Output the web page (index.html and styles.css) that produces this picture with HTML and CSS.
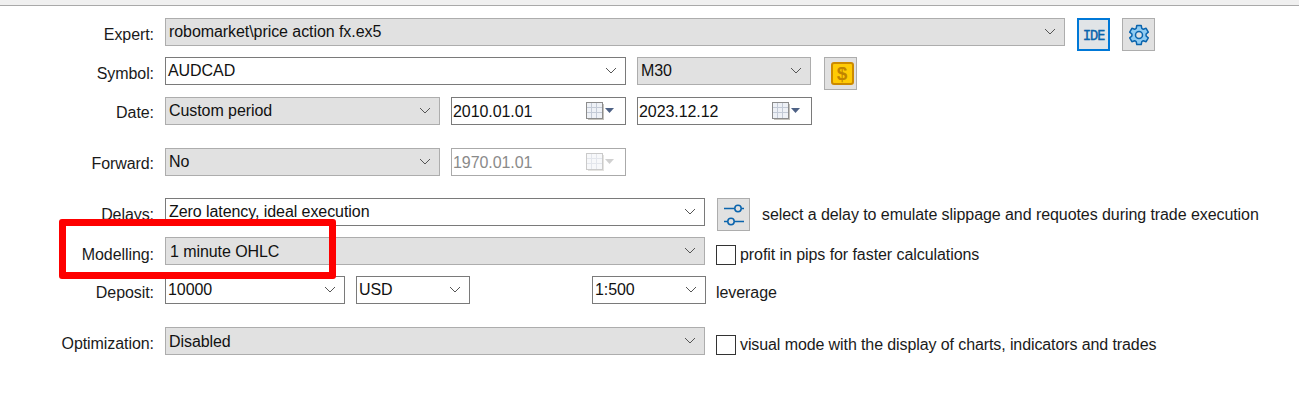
FILE: index.html
```html
<!DOCTYPE html>
<html lang="en">
<head>
<meta charset="utf-8">
<title>Strategy Tester Settings</title>
<link rel="stylesheet" href="styles.css">
</head>
<body>
<div class="topbar"></div>
<main class="form">
  <div class="row">
    <span class="label">Expert:</span>
    <div class="field gray w-expert"><span>robomarket\price action fx.ex5</span><svg class="chev" viewBox="0 0 12 7"><path d="M1 1l5 5 5-5"/></svg></div>
    <button class="iconbtn ide">IDE</button>
    <button class="iconbtn gear">
      <svg viewBox="0 0 24 24" width="24" height="24"><path class="gear-body" d="M9.800 2.500h4.400l.6 2.900 1.500.9 2.800-1 2.200 3.800-2.200 1.900v2l2.200 1.900-2.200 3.800-2.800-1-1.500.9-.6 2.900H9.800l-.6-2.900-1.500-.9-2.800 1-2.200-3.800 2.200-1.900v-2L2.700 9.100l2.200-3.800 2.800 1 1.500-.9z"/><circle class="gear-hole" cx="12" cy="12" r="3.500"/></svg>
    </button>
  </div>
  <div class="row">
    <span class="label">Symbol:</span>
    <div class="field white w-symbol"><span class="tight">AUDCAD</span><svg class="chev" viewBox="0 0 12 7"><path d="M1 1l5 5 5-5"/></svg></div>
    <div class="field gray w-period"><span>M30</span><svg class="chev" viewBox="0 0 12 7"><path d="M1 1l5 5 5-5"/></svg></div>
    <button class="iconbtn dollar"><span class="coin">$</span></button>
  </div>
  <div class="row">
    <span class="label label-high">Date:</span>
    <div class="field gray w-range"><span>Custom period</span><svg class="chev" viewBox="0 0 12 7"><path d="M1 1l5 5 5-5"/></svg></div>
    <div class="field date"><span class="tight">2010.01.01</span>
      <svg class="cal" viewBox="0 0 28 18"><rect class="shadow" x="2" y="2" width="16" height="16"/><rect class="sheet" x=".5" y=".5" width="16" height="16"/><path class="lines" d="M5.500 1v15M10.500 1v15M1 5.500h15M1 10.500h15"/><path class="arrow" d="M19 6h9l-4.500 5z"/></svg></div>
    <div class="field date"><span class="tight">2023.12.12</span>
      <svg class="cal" viewBox="0 0 28 18"><rect class="shadow" x="2" y="2" width="16" height="16"/><rect class="sheet" x=".5" y=".5" width="16" height="16"/><path class="lines" d="M5.500 1v15M10.500 1v15M1 5.500h15M1 10.500h15"/><path class="arrow" d="M19 6h9l-4.500 5z"/></svg></div>
  </div>
  <div class="row">
    <span class="label label-high">Forward:</span>
    <div class="field gray w-range"><span>No</span><svg class="chev" viewBox="0 0 12 7"><path d="M1 1l5 5 5-5"/></svg></div>
    <div class="field date disabled"><span class="tight">1970.01.01</span>
      <svg class="cal" viewBox="0 0 28 18"><rect class="shadow" x="2" y="2" width="16" height="16"/><rect class="sheet" x=".5" y=".5" width="16" height="16"/><path class="lines" d="M5.500 1v15M10.500 1v15M1 5.500h15M1 10.500h15"/><path class="arrow" d="M19 6h9l-4.500 5z"/></svg></div>
  </div>
  <div class="row">
    <span class="label">Delays:</span>
    <div class="field white w-wide"><span>Zero latency, ideal execution</span><svg class="chev" viewBox="0 0 12 7"><path d="M1 1l5 5 5-5"/></svg></div>
    <button class="iconbtn sliders">
      <svg viewBox="0 0 24 18" width="24" height="18"><path d="M2 2.500h11M19 2.500h3M2 15.500h4M12 15.500h10"/><circle cx="16" cy="2.500" r="3.200"/><circle cx="9" cy="15.500" r="3.200"/></svg>
    </button>
    <span class="note note-delay">select a delay to emulate slippage and requotes during trade execution</span>
  </div>
  <div class="row">
    <span class="label label-low">Modelling:</span>
    <div class="field gray w-wide low"><span class="nudge">1 minute OHLC</span><svg class="chev" viewBox="0 0 12 7"><path d="M1 1l5 5 5-5"/></svg></div>
    <label class="check"><span class="box"></span>profit in pips for faster calculations</label>
  </div>
  <div class="row">
    <span class="label">Deposit:</span>
    <div class="field white w-deposit"><span class="tight">10000</span><svg class="chev" viewBox="0 0 12 7"><path d="M1 1l5 5 5-5"/></svg></div>
    <div class="field white w-currency"><span class="tight">USD</span><svg class="chev" viewBox="0 0 12 7"><path d="M1 1l5 5 5-5"/></svg></div>
    <div class="field white w-lever"><span class="tight">1:500</span><svg class="chev" viewBox="0 0 12 7"><path d="M1 1l5 5 5-5"/></svg></div>
    <span class="note note-lever">leverage</span>
  </div>
  <div class="row">
    <span class="label">Optimization:</span>
    <div class="field gray w-wide low"><span>Disabled</span><svg class="chev" viewBox="0 0 12 7"><path d="M1 1l5 5 5-5"/></svg></div>
    <label class="check check-long"><span class="box"></span>visual mode with the display of charts, indicators and trades</label>
  </div>
</main>
<div class="highlight"></div>
</body>
</html>
```
FILE: styles.css
```css
* { box-sizing: border-box; }
html, body { margin: 0; height: 420px; overflow: hidden; background: #fff; }
body {
  position: relative;
  font-family: "Liberation Sans", Arial, sans-serif;
  font-size: 16px;
  letter-spacing: -.07px;
  color: #111;
}
.topbar {
  height: 6px;
  background: #f0f0f0;
  border-bottom: 1px solid #a9a9a9;
}
.form {
  display: grid;
  grid-template-rows: 39px 40px 51px 50px 39px 39px 51px 39px;
  padding-top: 12px;
}
.row {
  display: flex;
  align-items: flex-start;
  gap: 11px;
}
.label {
  width: 154px;
  height: 28px;
  line-height: 33px;
  text-align: right;
  color: #1a1a1a;
}
.label-high { line-height: 31px; }
.label-low { line-height: 35px; }
.field {
  display: flex;
  align-items: center;
  justify-content: space-between;
  height: 28px;
  padding: 0 8px 1px 3px;
  line-height: 22px;
  flex: none;
}
.low span { position: relative; top: 1px; }
.nudge { margin-left: 1px; }
.gray { background: #e1e1e1; border: 1px solid #adadad; }
.white { background: #fff; border: 1px solid #7a7a7a; }
.tight { margin-left: -1px; }
.chev { width: 12px; height: 7px; fill: none; stroke: #555; stroke-width: 1; }
.w-expert { width: 900px; }
.w-symbol { width: 461px; }
.w-period { width: 174px; }
.w-range { width: 275px; }
.w-wide { width: 540px; }
.w-deposit { width: 180px; }
.w-currency { width: 114px; }
.w-lever { width: 114px; margin-left: 111px; }
.date {
  width: 175px;
  background: #fff;
  border: 1px solid #7a7a7a;
  padding-right: 11px;
}
.date .tight { margin-left: -2px; position: relative; top: 1px; }
.date.disabled { color: #8a8a8a; border-color: #aaa; }
.cal { width: 28px; height: 18px; margin-top: 1px; }
.shadow { fill: #c4c2bc; }
.sheet { fill: #eef1f6; stroke: #8c8c8c; }
.lines { fill: none; stroke: #c3cad6; }
.arrow { fill: #4d6185; }
.disabled .cal { opacity: .45; }
.disabled .arrow { fill: #999; }
.iconbtn {
  display: flex;
  align-items: center;
  justify-content: center;
  width: 33px;
  height: 33px;
  padding: 0;
  margin-left: 1px;
  background: #e1e1e1;
  border: 1px solid #adadad;
  font: inherit;
}
.ide {
  background: #e1e4e7;
  border: 2px solid #0078d7;
  color: #0a64ad;
  font-family: "DejaVu Sans Mono", monospace;
  font-size: 14px;
  letter-spacing: -1.2px;
  -webkit-text-stroke: .3px #0a64ad;
}
.gear-body { fill: #8fcbf2; stroke: #0a64ad; stroke-width: 1.5; stroke-linejoin: round; }
.gear-hole { fill: #e1e1e1; stroke: #0a64ad; stroke-width: 1.5; }
.dollar { margin-left: 2px; }
.coin {
  display: block;
  width: 23px;
  height: 23px;
  margin-left: 3px;
  line-height: 20px;
  text-align: center;
  background: #ffcb05;
  border: 2px solid #cc8a00;
  border-radius: 3px;
  color: #c08400;
  font-weight: bold;
  font-size: 19px;
}
.sliders svg { fill: none; stroke: #0a64ad; stroke-width: 1.5; overflow: visible; }
.sliders circle { fill: #e1e1e1; }
.note { line-height: 33px; color: #1a1a1a; }
.note-delay { margin-left: 1px; }
.note-lever { margin-left: -1px; }
.check {
  display: flex;
  align-items: center;
  gap: 4px;
  height: 31px;
  margin-top: 2px;
  color: #1a1a1a;
}
.check-long { letter-spacing: -.1px; }
.box {
  width: 20px;
  height: 20px;
  background: #fff;
  border: 1px solid #333;
}
.highlight {
  position: absolute;
  left: 59px;
  top: 219px;
  width: 277px;
  height: 60px;
  border: 7px solid #fe0000;
  border-radius: 3px;
}
```
